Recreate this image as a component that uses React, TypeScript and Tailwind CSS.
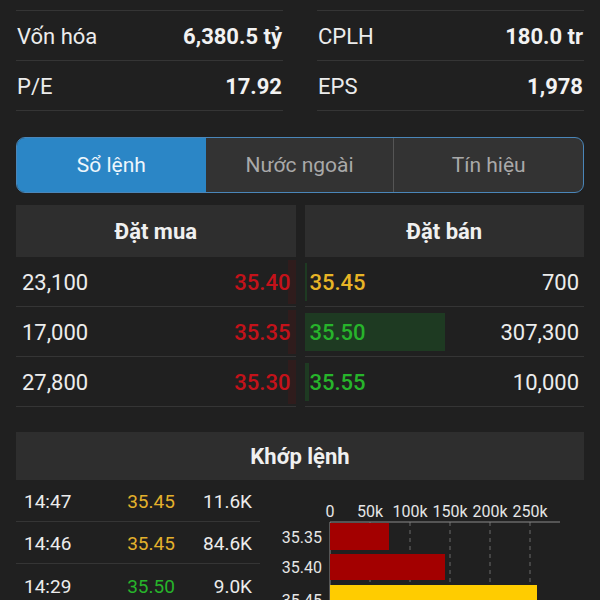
const FONT = { fontFamily: 'Roboto, "Noto Sans", Arial, sans-serif' };

const stats = [
  [
    { label: 'Vốn hóa', value: '6,380.5 tỷ' },
    { label: 'P/E', value: '17.92' },
  ],
  [
    { label: 'CPLH', value: '180.0 tr' },
    { label: 'EPS', value: '1,978' },
  ],
];

const bids = [
  { qty: '23,100', price: '35.40' },
  { qty: '17,000', price: '35.35' },
  { qty: '27,800', price: '35.30' },
];

const asks = [
  { price: '35.45', qty: '700', color: 'text-[#e8b526]', bar: 2 },
  { price: '35.50', qty: '307,300', color: 'text-[#27b42b]', bar: 140 },
  { price: '35.55', qty: '10,000', color: 'text-[#27b42b]', bar: 4 },
];

const trades = [
  { time: '14:47', price: '35.45', vol: '11.6K', color: 'text-[#e3b12c]' },
  { time: '14:46', price: '35.45', vol: '84.6K', color: 'text-[#e3b12c]' },
  { time: '14:29', price: '35.50', vol: '9.0K', color: 'text-[#27b42b]' },
];

function VolumeChart() {
  const x0 = 70;
  const step = 40;
  const ticks = ['0', '50k', '100k', '150k', '200k', '250k'];
  const bars = [
    { label: '35.35', y: 43, h: 27, w: 59, fill: '#a30000' },
    { label: '35.40', y: 74, h: 26, w: 115, fill: '#a30000' },
    { label: '35.45', y: 105, h: 30, w: 207, fill: '#ffcc00' },
  ];
  return (
    <svg width="323" height="120" viewBox="0 0 323 120" className="block">
      {ticks.map((t, i) => (
        <text key={t} x={x0 + i * step} y="37" fill="#e6e6e6" fontSize="16" textAnchor="middle" style={FONT}>
          {t}
        </text>
      ))}
      {ticks.slice(1).map((t, i) => (
        <line
          key={t}
          x1={x0 + (i + 1) * step}
          x2={x0 + (i + 1) * step}
          y1="42"
          y2="120"
          stroke="#6a6a6a"
          strokeWidth="1"
          strokeDasharray="4 4"
        />
      ))}
      <line x1={x0} x2="300" y1="42" y2="42" stroke="#8a8a8a" strokeWidth="1" />
      <line x1={x0} x2={x0} y1="42" y2="120" stroke="#8a8a8a" strokeWidth="1" />
      {bars.map((b) => (
        <g key={b.label}>
          <rect x={x0} y={b.y} width={b.w} height={b.h} fill={b.fill} />
          <text x="62" y={b.y + b.h / 2 + 6} fill="#e6e6e6" fontSize="16" textAnchor="end" style={FONT}>
            {b.label}
          </text>
        </g>
      ))}
    </svg>
  );
}

export default function App() {
  return (
    <div className="w-[600px] h-[600px] overflow-hidden bg-[#202020] px-4 pt-[10px]" style={FONT}>
      {/* thông tin cơ bản */}
      <div className="grid grid-cols-2 gap-x-[34px]">
        {stats.map((col, ci) => (
          <div key={ci} className="border-t border-[#353535]">
            {col.map((s) => (
              <div key={s.label} className="flex h-[50px] items-center justify-between border-b border-[#353535] px-[1px] pt-[2px]">
                <span className="text-[22px] text-[#ececec]">{s.label}</span>
                <span className="text-[22px] font-bold text-[#f2f2f2]">{s.value}</span>
              </div>
            ))}
          </div>
        ))}
      </div>

      {/* tabs */}
      <div className="mt-[26px] grid h-[56px] grid-cols-3 overflow-hidden rounded-[9px] border-[1.5px] border-[#4a86b9] bg-[#333333]">
        <div className="flex items-center justify-center bg-[#2b86c6] pt-[2px] text-[21px] text-[#eef6fc]">Sổ lệnh</div>
        <div className="flex items-center justify-center border-r border-[#555] pt-[2px] text-[21px] text-[#a9a9a9]">Nước ngoài</div>
        <div className="flex items-center justify-center pt-[2px] text-[21px] text-[#a9a9a9]">Tín hiệu</div>
      </div>

      {/* sổ lệnh */}
      <div className="mt-[12px] grid grid-cols-2 gap-x-[9px]">
        <div>
          <div className="flex h-[52px] items-center justify-center bg-[#2e2e2e] text-[22px] font-bold text-[#f0f0f0]">Đặt mua</div>
          {bids.map((b) => (
            <div key={b.price} className="relative flex h-[50px] items-center justify-between border-b border-[#353535] pl-[6px] pr-[5px] pt-[2px]">
              <div className="absolute right-0 top-[3px] h-[44px] w-[8px] bg-[#2f1c1c]" />
              <span className="text-[22px] text-[#ececec]">{b.qty}</span>
              <span className="relative text-[22px] font-medium text-[#c4121a]">{b.price}</span>
            </div>
          ))}
        </div>
        <div>
          <div className="flex h-[52px] items-center justify-center bg-[#2e2e2e] text-[22px] font-bold text-[#f0f0f0]">Đặt bán</div>
          {asks.map((a) => (
            <div key={a.price} className="relative flex h-[50px] items-center justify-between border-b border-[#353535] pl-[5px] pr-[5px] pt-[2px]">
              <div className="absolute left-0 top-[6px] h-[38px] bg-[#1e3a22]" style={{ width: a.bar }} />
              <span className={`relative text-[22px] font-medium ${a.color}`}>{a.price}</span>
              <span className="text-[22px] text-[#ececec]">{a.qty}</span>
            </div>
          ))}
        </div>
      </div>

      {/* khớp lệnh */}
      <div className="mt-[25px]">
        <div className="flex h-[48px] items-center justify-center bg-[#2e2e2e] pt-[1px] text-[22px] font-bold text-[#f0f0f0]">Khớp lệnh</div>
        <div className="flex">
          <div className="w-[244px]">
            {trades.map((t, i) => (
              <div
                key={t.time}
                className={`flex h-[42px] items-center px-2 pt-[4px] ${i < 2 ? 'border-b border-[#353535]' : ''}`}
              >
                <span className="flex-1 text-[19px] text-[#ececec]">{t.time}</span>
                <span className={`w-[70px] text-center text-[19px] ${t.color}`}>{t.price}</span>
                <span className="w-[66px] text-right text-[19px] text-[#ececec]">{t.vol}</span>
              </div>
            ))}
          </div>
          <div className="flex-1">
            <VolumeChart />
          </div>
        </div>
      </div>
    </div>
  );
}
